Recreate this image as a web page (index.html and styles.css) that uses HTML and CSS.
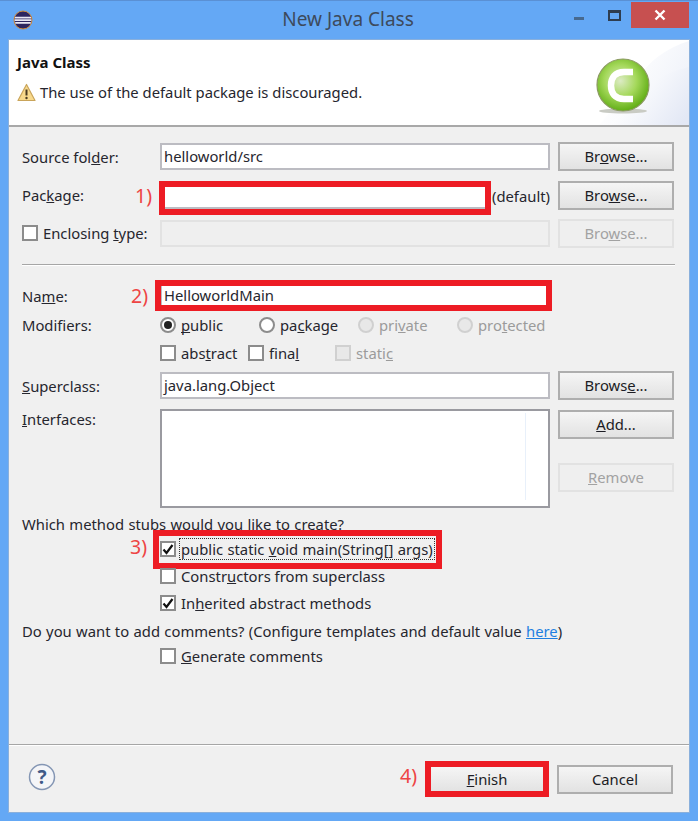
FILE: index.html
```html
<!DOCTYPE html>
<html lang="en">
<head>
  <meta charset="UTF-8">
  <title>New Java Class</title>
  <link rel="stylesheet" href="styles.css">
</head>
<body>
  <div class="window">
    <div class="titlebar">
      <svg class="app-icon" width="20" height="20" viewBox="0 0 20 20">
        <circle cx="10" cy="10" r="9" fill="#2c2560" stroke="#d08a3a" stroke-width="1"/>
        <path d="M2 7.6h16M1.6 10.2h16.8M2.2 12.8h15.6" stroke="#e8e8f4" stroke-width="1.8"/>
      </svg>
      <span class="title">New Java Class</span>
      <div class="controls">
        <span class="ctl-min"></span>
        <span class="ctl-max"></span>
        <span class="ctl-close">
          <svg width="12" height="12" viewBox="0 0 12 12"><path d="M1.5 1.5l9 9M10.5 1.5l-9 9" stroke="#fff" stroke-width="2.4"/></svg>
        </span>
      </div>
    </div>

    <div class="dialog">
      <div class="banner">
        <svg class="banner-bg" width="130" height="85" viewBox="0 0 130 85">
          <defs>
            <linearGradient id="swoop" x1="0" y1="0.3" x2="1" y2="0.8">
              <stop offset="0.2" stop-color="#fff"/>
              <stop offset="1" stop-color="#e3e8f5"/>
            </linearGradient>
          </defs>
          <path d="M130 1C108 8 90 20 78 40L40 85H130Z" fill="url(#swoop)" opacity="0.65"/>
          <path d="M130 27C112 31 98 38 88 50L50 85H130Z" fill="url(#swoop)"/>
        </svg>
        <h1>Java Class</h1>
        <div class="warning">
          <svg width="19" height="19" viewBox="0 0 19 19">
            <path d="M9.5 1.5L18 17.5H1Z" fill="#f8d98c" stroke="#c9a45a" stroke-width="1.2" stroke-linejoin="round"/>
            <path d="M9.5 6.5v6" stroke="#4a3a20" stroke-width="2"/>
            <circle cx="9.5" cy="15" r="1.2" fill="#4a3a20"/>
          </svg>
          <span>The use of the default package is discouraged.</span>
        </div>
        <svg class="class-icon" width="56" height="58" viewBox="0 0 56 58">
          <defs>
            <radialGradient id="ball" cx="0.45" cy="0.42" r="0.62">
              <stop offset="0" stop-color="#dcebc4"/>
              <stop offset="0.5" stop-color="#a4d85a"/>
              <stop offset="1" stop-color="#58a80c"/>
            </radialGradient>
          </defs>
          <ellipse cx="28" cy="54" rx="24" ry="2.5" fill="#c9cbc4"/>
          <circle cx="28" cy="28" r="26" fill="url(#ball)" stroke="#8c9a62" stroke-width="1.2"/>
          <path d="M38 15H29C20 15 16 21 16 28.500S20 42 29 42H38" fill="none" stroke="#fff" stroke-width="6.500"/>
        </svg>
      </div>

      <div class="form">
        <div class="row">
          <span>Source fol<u>d</u>er:</span>
          <div class="field">helloworld/src</div>
          <div class="btn">Br<u>o</u>wse...</div>
        </div>

        <div class="row">
          <span class="label-up">Pac<u>k</u>age:</span>
          <div class="package-cell">
            <div class="field marked mark-package">
              <span class="step step-1">1)</span>
            </div>
            <span>(default)</span>
          </div>
          <div class="btn">Bro<u>w</u>se...</div>
        </div>

        <div class="row row-tight">
          <label class="check label-up"><i class="box"></i><span>Enclosing <u>t</u>ype:</span></label>
          <div class="field field-off"></div>
          <div class="btn btn-off">Bro<u>w</u>se...</div>
        </div>

        <hr class="rule">

        <div class="row row-name">
          <span>Na<u>m</u>e:</span>
          <div class="field marked mark-name">HelloworldMain
            <span class="step step-2">2)</span>
          </div>
        </div>

        <div class="row row-opt">
          <span>Modifiers:</span>
          <div class="radios">
            <label class="check"><i class="radio on"></i><span><u>p</u>ublic</span></label>
            <label class="check"><i class="radio"></i><span>pa<u>c</u>kage</span></label>
            <label class="check off"><i class="radio"></i><span>pri<u>v</u>ate</span></label>
            <label class="check off"><i class="radio"></i><span>pro<u>t</u>ected</span></label>
          </div>
        </div>

        <div class="row row-opt">
          <span></span>
          <div class="flags">
            <label class="check"><i class="box"></i><span>abs<u>t</u>ract</span></label>
            <label class="check"><i class="box"></i><span>fina<u>l</u></span></label>
            <label class="check off"><i class="box"></i><span>stati<u>c</u></span></label>
          </div>
        </div>

        <div class="row row-super">
          <span><u>S</u>uperclass:</span>
          <div class="field">java.lang.Object</div>
          <div class="btn">Brows<u>e</u>...</div>
        </div>

        <div class="row row-list">
          <span><u>I</u>nterfaces:</span>
          <div class="listbox"><i class="list-bar"></i></div>
          <div class="list-btns">
            <div class="btn"><u>A</u>dd...</div>
            <div class="btn btn-off"><u>R</u>emove</div>
          </div>
        </div>

        <p class="line line-first">Which method stubs would you like to create?</p>
        <div class="indent">
          <label class="check mark-main">
            <i class="box on">
              <svg width="12" height="12" viewBox="0 0 12 12"><path d="M1.500 6.500l3 3.500 6-8" fill="none" stroke="#111" stroke-width="2.200"/></svg>
            </i>
            <span class="focused">public static <u>v</u>oid main(String[] args)</span>
            <span class="step step-3">3)</span>
          </label>
        </div>
        <div class="indent">
          <label class="check"><i class="box"></i><span>Constr<u>u</u>ctors from superclass</span></label>
        </div>
        <div class="indent">
          <label class="check">
            <i class="box on">
              <svg width="12" height="12" viewBox="0 0 12 12"><path d="M1.500 6.500l3 3.500 6-8" fill="none" stroke="#111" stroke-width="2.200"/></svg>
            </i>
            <span>In<u>h</u>erited abstract methods</span>
          </label>
        </div>
        <p class="line line-second">Do you want to add comments? (Configure templates and default value <a href="#">here</a>)</p>
        <div class="indent">
          <label class="check"><i class="box"></i><span><u>G</u>enerate comments</span></label>
        </div>
      </div>

      <div class="footer">
        <svg class="help" width="28" height="28" viewBox="0 0 28 28">
          <circle cx="14" cy="14" r="12.500" fill="#f4f5f8" stroke="#8496b4" stroke-width="1.500"/>
          <text x="14" y="20.500" text-anchor="middle" class="help-mark">?</text>
        </svg>
        <div class="btn btn-finish">
          <u>F</u>inish
          <span class="step step-4">4)</span>
        </div>
        <div class="btn">Cancel</div>
      </div>
    </div>
  </div>
</body>
</html>
```

FILE: styles.css
```css
body {
  margin: 0;
  background: #fff;
  font-family: "Noto Sans", sans-serif;
  font-size: 14.8px;
  color: #26262e;
}

u {
  text-decoration-skip-ink: none;
}

.window {
  width: 698px;
  height: 821px;
  box-sizing: border-box;
  padding: 0 9px 9px;
  background: #64a8f5;
  border-top: 1px solid #5a90d4;
  display: flex;
  flex-direction: column;
}

.titlebar {
  height: 39px;
  flex: none;
  position: relative;
  display: flex;
  align-items: center;
  justify-content: center;
}

.app-icon {
  position: absolute;
  left: 4px;
  top: 9px;
}

.title {
  font-size: 19px;
  color: #3d4a5c;
  margin: -3px 2px 0 0;
}

.controls {
  position: absolute;
  top: 1px;
  right: 0;
  display: flex;
}

.ctl-min {
  width: 10px;
  height: 3px;
  margin: 15px 24px 0 0;
  background: #47698f;
}

.ctl-max {
  width: 13px;
  height: 11px;
  margin: 8px 10px 0 0;
  border: 2px solid #2e3d50;
  border-top-width: 3px;
  box-sizing: border-box;
}

.ctl-close {
  width: 58px;
  height: 26px;
  background: #c75050;
  display: flex;
  align-items: center;
  justify-content: center;
}

.dialog {
  flex: 1;
  background: #f0f0f0;
  display: flex;
  flex-direction: column;
  box-shadow: 0 0 0 1px #8ab0dc;
}

.banner {
  height: 87px;
  flex: none;
  box-sizing: border-box;
  padding: 12px 8px 0;
  background: #fff;
  border-bottom: 2px solid #a8a8a8;
  position: relative;
}

.banner h1 {
  margin: 0;
  font-size: 15px;
  font-weight: 700;
  color: #111;
  line-height: 20px;
}

.banner-bg {
  position: absolute;
  right: 0;
  top: 0;
}

.class-icon {
  position: absolute;
  right: 38px;
  top: 17px;
}

.warning {
  display: flex;
  align-items: center;
  gap: 4px;
  margin-top: 10px;
  position: relative;
}

.form {
  flex: 1;
  padding: 15px 15px 0 13px;
}

.row {
  display: grid;
  grid-template-columns: 130px 390px 116px;
  column-gap: 8px;
  align-items: center;
  height: 29px;
  margin-top: 10px;
}

.row:first-child {
  margin-top: 0;
}

.row-tight {
  margin-top: 9px;
}

.label-up {
  margin-bottom: 2px;
}

.row-name {
  margin-top: 15px;
}

.row-opt {
  height: 27px;
  margin-top: 1px;
}

.row-super {
  margin-top: 5px;
}

.row-list {
  height: 99px;
  margin-top: 9px;
  align-items: start;
}

.field {
  height: 27px;
  box-sizing: border-box;
  border: 2px solid #bcbcc2;
  background: #fff;
  padding: 0 2px;
  line-height: 23px;
  position: relative;
}

.field-off {
  background: #efefef;
  border-color: #e2e2e2;
}

.package-cell {
  display: flex;
  justify-content: space-between;
  align-items: center;
}

.package-cell .field {
  width: 330px;
}

.btn {
  height: 29px;
  box-sizing: border-box;
  border: 2px solid #aeaeae;
  background: linear-gradient(#f5f5f5, #e2e2e2);
  text-align: center;
  line-height: 25px;
  color: #1c1c24;
  position: relative;
}

.btn-off {
  border-color: #e2e2e2;
  background: #efefef;
  color: #a2a2a2;
}

.rule {
  margin: 16px 0 0;
  width: 653px;
  border: none;
  border-top: 1px solid #a6a6a6;
  border-bottom: 1px solid #fff;
}

.check {
  display: inline-flex;
  align-items: center;
  gap: 5px;
  position: relative;
}

.check.off {
  color: #9b9b9b;
}

.box,
.radio {
  width: 16px;
  height: 16px;
  flex: none;
  box-sizing: border-box;
  border: 2px solid #8c8c8c;
  background: #fff;
  display: flex;
  align-items: center;
  justify-content: center;
}

.radio {
  border-radius: 50%;
}

.radio.on::after {
  content: "";
  width: 8px;
  height: 8px;
  border-radius: 50%;
  background: #222;
}

.check.off .box,
.check.off .radio {
  background: #e8e8e8;
  border-color: #d0d0d0;
}

.radios {
  display: grid;
  grid-template-columns: repeat(4, 99px);
  grid-column: 2 / 4;
}

.flags {
  display: grid;
  grid-template-columns: 88px 87px 100px;
  grid-column: 2 / 4;
}

.listbox {
  height: 99px;
  box-sizing: border-box;
  border: 2px solid #9a9aa0;
  background: #fff;
  position: relative;
}

.list-bar {
  position: absolute;
  left: 363px;
  top: 2px;
  bottom: 6px;
  width: 1px;
  background: #e8f0fa;
}

.list-btns {
  display: flex;
  flex-direction: column;
  gap: 24px;
  padding-top: 1px;
}

.line {
  margin: 0;
  height: 24px;
  line-height: 27px;
  white-space: nowrap;
  word-spacing: 0.5px;
}

.line-first {
  margin-top: 3px;
}

.line-second {
  margin-top: 2px;
}

.line a {
  color: #1f7fe0;
}

.indent {
  height: 27px;
  display: flex;
  align-items: center;
  padding-left: 138px;
}

.focused {
  outline: 1px dotted #333;
  outline-offset: 0;
  padding: 0 1px;
  margin-left: -1px;
  line-height: 20px;
  word-spacing: 0.5px;
}

/* red annotations drawn over the dialog */
.marked::before,
.mark-main::before,
.btn-finish::before {
  content: "";
  position: absolute;
  border: 6px solid #ed1c24;
  pointer-events: none;
}

.mark-package::before {
  left: -3px;
  top: -3px;
  right: -3px;
  bottom: -8px;
}

.mark-name::before {
  left: -7px;
  top: -4px;
  right: -4px;
  bottom: -4px;
}

.mark-main::before {
  left: -7px;
  top: -9px;
  right: -8px;
  bottom: -10px;
}

.btn-finish::before {
  left: -6px;
  top: -6px;
  right: -6px;
  bottom: -5px;
}

.step {
  position: absolute;
  font-size: 19.5px;
  line-height: 24px;
  color: #ee4444;
  font-weight: 400;
}

.step-1 {
  left: -27px;
  top: 0;
}

.step-2 {
  left: -31px;
  top: 0;
}

.step-3 {
  left: -30px;
  top: -4px;
}

.step-4 {
  left: -31px;
  top: -3px;
}

.footer {
  height: 68px;
  flex: none;
  box-sizing: border-box;
  border-top: 1px solid #a6a6a6;
  box-shadow: inset 0 1px 0 #fff;
  padding: 20px 16px 0 19px;
  display: flex;
  gap: 12px;
}

.footer .btn {
  width: 116px;
}

.help {
  margin-top: -2px;
  margin-right: auto;
}

.help-mark {
  font-size: 19px;
  font-weight: 700;
  fill: #3f5a88;
}
```
